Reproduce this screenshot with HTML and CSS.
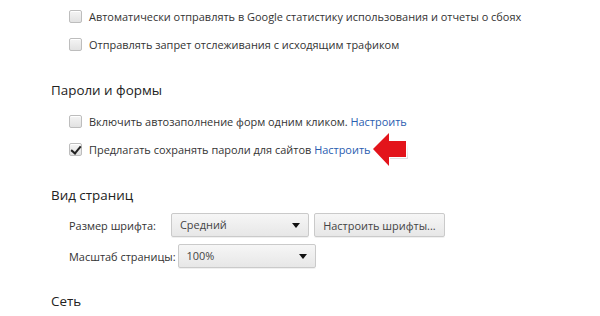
FILE: index.html
```html
<!DOCTYPE html>
<html lang="ru">

<head>
    <meta charset="UTF-8">
    <title>Настройки</title>
    <link rel="stylesheet" href="styles.css">
</head>

<body>

    <div class="section">
        <label class="row"><span class="box"></span>Автоматически отправлять в Google статистику использования и отчеты о сбоях</label>
        <label class="row"><span class="box"></span>Отправлять запрет отслеживания с исходящим трафиком</label>
    </div>

    <div class="section">
        <h3>Пароли и формы</h3>
        <label class="row"><span class="box"></span>Включить автозаполнение форм одним кликом.&nbsp;<a href="#">Настроить</a></label>
        <label class="row"><span class="box checked"></span>Предлагать сохранять пароли для сайтов&nbsp;<a href="#">Настроить</a>
            <!-- стрелка-подсказка -->
            <svg class="arrow" width="38" height="36" viewBox="0 0 38 36">
                <polygon points="18,27 36,27 36,11 35,26 18,26" fill="#999" opacity="0.3" />
                <polygon points="1,17 17,1 17,9 34,9 34,25 17,25 17,34" fill="#e3141b" />
            </svg>
        </label>
    </div>

    <div class="section">
        <h3>Вид страниц</h3>
        <div class="field">
            <span class="field-label first">Размер шрифта:</span>
            <div class="select wide">Средний<span class="caret"></span></div>
            <button class="btn">Настроить шрифты...</button>
        </div>
        <div class="field">
            <span class="field-label">Масштаб страницы:</span>
            <div class="select wide">100%<span class="caret"></span></div>
        </div>
    </div>

    <div class="section last">
        <h3>Сеть</h3>
    </div>

</body>

</html>
```

FILE: styles.css
```css
body {
    margin: 0;
    padding: 2px 0 0 51px;
    background: #fff;
    font-family: "Open Sans", "Noto Sans", sans-serif;
    font-size: 10.95px;
    color: #333;
    overflow: hidden;
}

.section {
    margin-bottom: 22px;
}

.section.last {
    margin-bottom: 0;
}

h3 {
    margin: 0 0 7px;
    height: 20px;
    line-height: 20px;
    font-size: 13.4px;
    font-weight: normal;
    color: #222;
}

.row {
    position: relative;
    display: flex;
    align-items: center;
    height: 28px;
    padding-left: 18px;
    white-space: nowrap;
}

.box {
    width: 11px;
    height: 11px;
    margin-right: 7px;
    border: 1px solid #bdbdbd;
    border-radius: 2px;
    background: linear-gradient(#f4f4f4, #e2e2e2);
    box-shadow: inset 0 1px 0 #fff;
    position: relative;
}

.box.checked::after {
    content: "";
    position: absolute;
    left: 3px;
    top: 0px;
    width: 4px;
    height: 8px;
    border: solid #222;
    border-width: 0 2px 2px 0;
    transform: rotate(40deg);
}

a {
    color: #2a5db0;
    text-decoration: none;
}

.arrow {
    position: absolute;
    left: 321px;
    top: -3px;
}

.field {
    display: flex;
    align-items: center;
    height: 26px;
    margin-bottom: 5px;
    padding-left: 18px;
    white-space: nowrap;
}

.field-label {
    margin-right: 2px;
}

.field-label.first {
    margin-right: 15px;
}

.select {
    position: relative;
    box-sizing: border-box;
    height: 24px;
    line-height: 22px;
    padding-left: 8px;
    border: 1px solid #cacaca;
    border-radius: 2px;
    background: linear-gradient(#f6f6f6, #e7e7e7);
    box-shadow: 0 1px 0 rgba(0, 0, 0, 0.06);
    color: #444;
}

.wide {
    width: 138px;
}

.caret {
    position: absolute;
    right: 8px;
    top: 9px;
    border: 4px solid transparent;
    border-top: 5px solid #111;
    border-bottom: 0;
}

.btn {
    margin-left: 5px;
    box-sizing: border-box;
    height: 24px;
    width: 131px;
    padding: 0;
    border: 1px solid #cacaca;
    border-radius: 2px;
    background: linear-gradient(#f6f6f6, #e7e7e7);
    box-shadow: 0 1px 0 rgba(0, 0, 0, 0.06);
    font-family: inherit;
    font-size: 10.95px;
    color: #444;
}
```
